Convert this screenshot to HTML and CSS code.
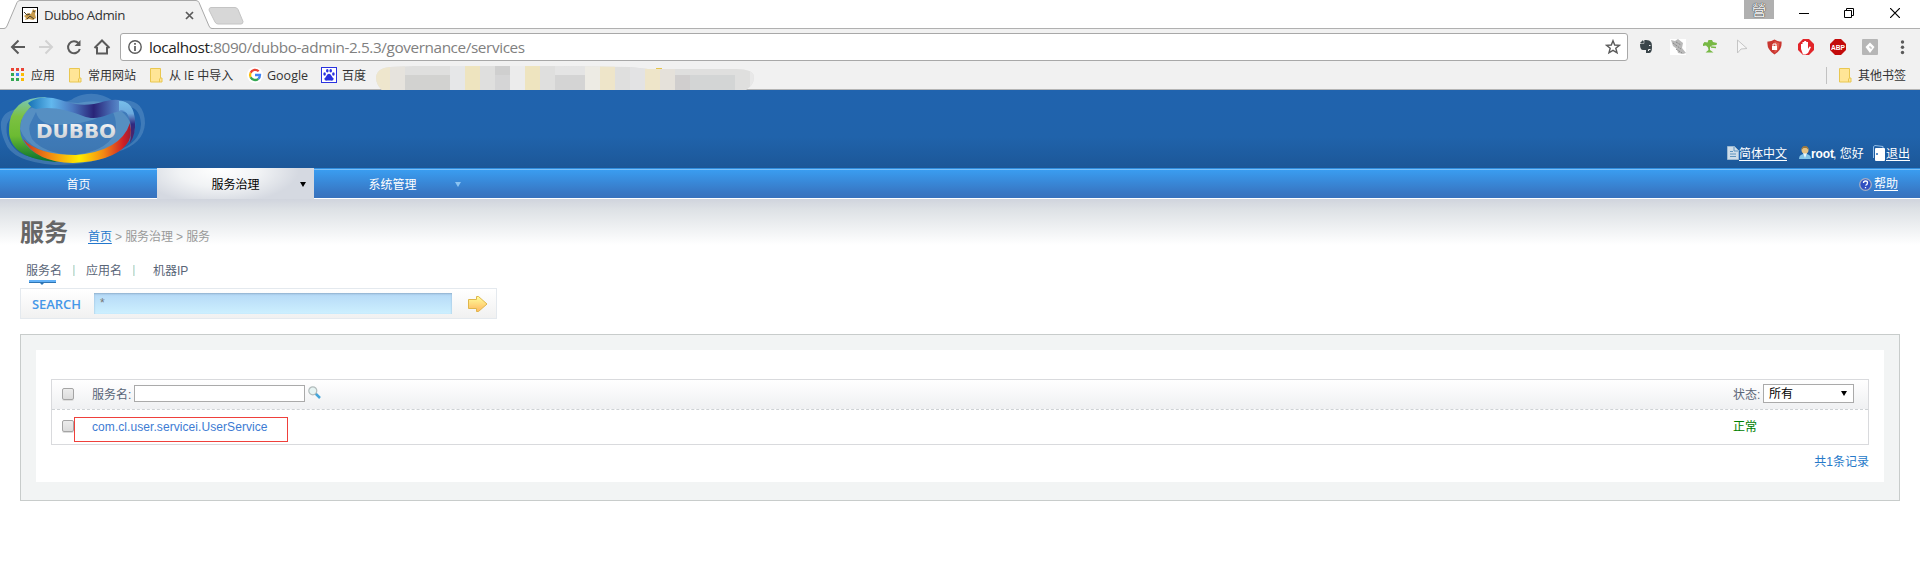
FILE: index.html
```html
<!DOCTYPE html>
<html lang="zh-CN">
<head>
<meta charset="utf-8">
<title>Dubbo Admin</title>
<link rel="stylesheet" href="styles.css">
</head>
<body>
<div class="tabstrip">
  <div class="tab">
    <svg class="tab-shape" width="214" height="29" viewBox="0 0 214 29"><path d="M0 28.5H4Q6 28.500 7 26L17 2.500Q18 .5 20 .5H196Q198 .5 199 2.500L209 26Q210 28.500 212 28.500H214V29H0z" fill="#f1f1f1"/><path d="M0 28.5H4Q6 28.500 7 26L17 2.500Q18 .5 20 .5H196Q198 .5 199 2.500L209 26Q210 28.500 212 28.500H214" fill="none" stroke="#a9a9a9"/></svg>
    <svg class="favicon" width="16" height="16" viewBox="0 0 16 16"><rect x=".5" y=".5" width="15" height="15" fill="#fff" stroke="#000"/><path d="M2 9l4-3 3 1 2-5 1 1h2l-1 4 1 4-3 2-4-1-4 1 1-2z" fill="#c89b4b"/><path d="M2 5l3 3 3-1M5 12l3-3 4 3M11 4l2 1" stroke="#49402e" fill="none"/></svg>
    <span class="tab-title">Dubbo Admin</span>
    <svg class="tab-close" width="9" height="9" viewBox="0 0 9 9"><path d="M1 1l7 7M8 1L1 8" stroke="#5a5a5a" stroke-width="1.700"/></svg>
  </div>
  <svg class="newtab" width="36" height="18" viewBox="0 0 36 18"><path d="M3 .5H27Q29 .5 30 2.500L35 14.500Q35 17 33 17H10Q8 17 7 15L1 3Q1 .5 3 .5z" fill="#d7d7d7" stroke="#c4c4c4"/></svg>
  <div class="window-controls">
    <span class="ime">營</span>
    <svg class="win-min" width="10" height="10" viewBox="0 0 10 10"><path d="M0 5.500H10" stroke="#000"/></svg>
    <svg class="win-max" width="10" height="10" viewBox="0 0 10 10"><path d="M.5 2.500H7.500V9.500H.5zM2.500 2.500V.5H9.500V7.500H7.500" fill="none" stroke="#000"/></svg>
    <svg class="win-close" width="10" height="10" viewBox="0 0 10 10"><path d="M0 0L10 10M10 0L0 10" stroke="#000" stroke-width="1.200"/></svg>
  </div>
</div>

<div class="toolbar">
  <svg class="nav-icons" width="112" height="36" viewBox="0 0 112 36" fill="none" stroke-width="2">
    <path d="M25 18H12.500M18.500 11.500L12 18l6.500 6.500" stroke="#5a5a5a"/>
    <path d="M39 18H51.500M45.500 11.500L52 18l-6.500 6.500" stroke="#d2d2d2"/>
    <path d="M78.500 14.200A6 6 0 1 0 79.800 20" stroke="#5a5a5a"/><path d="M80.500 11v6h-6z" fill="#5a5a5a"/>
    <path d="M94.500 19L102 11.500L109.500 19M97 18v6.500h10V18" stroke="#5a5a5a"/>
  </svg>
  <div class="address">
    <svg class="info" width="14" height="14" viewBox="0 0 14 14"><circle cx="7" cy="7" r="6.200" fill="none" stroke="#5a5a5a" stroke-width="1.400"/><path d="M7 3v1.700M7 6v5" stroke="#5a5a5a" stroke-width="1.700"/></svg>
    <span class="url">localhost<span class="path">:8090/dubbo-admin-2.5.3/governance/services</span></span>
    <svg class="star" width="16" height="16" viewBox="0 0 16 16"><path d="M8 1.700l1.700 4.300 4.800.3-3.700 3 1.200 4.500L8 11.300l-4 2.500 1.200-4.500-3.700-3 4.800-.3z" fill="none" stroke="#5a5a5a" stroke-width="1.400"/></svg>
  </div>
  <svg class="extensions" width="290" height="36" viewBox="1630 29 290 36">
    <path d="M1640 44l4.500-4q5-.5 6.500 2 1 1 1 5 0 6-3 6h-3v-3h-3q-3 0-3-6z" fill="#3b464b"/><path d="M1640 43l3-3v3z" fill="#3b464b"/><path d="M1640 43.500h4v-3.500" fill="none" stroke="#f1f1f1" stroke-width=".5"/><path d="M1648.500 51v-1.500h2" fill="none" stroke="#f1f1f1"/><path d="M1649 45.500h1.500" stroke="#f1f1f1"/>
    <rect x="1670" y="39" width="16" height="16" fill="#fff"/><path d="M1671 40l4 1 3-2 5 4-1 5 4 5-3 1-5-1-1-4-4-3z" fill="#b9b9b9"/><path d="M1673 43l8 6m-5-7l5 3m-5 4l6 4" stroke="#888" stroke-dasharray="2 1"/>
    <path d="M1703 44l1.500-2 3 .5 1-2.500h3.500l1 2 4 1-.5 2-4.500.5-2 1.500v3l3.500 2.500h-8l3-2.500-.5-2.500-2-2-3 .5z" fill="#77b844"/><path d="M1711 47l5 .5" stroke="#77b844" stroke-width="1.500"/>
    <path d="M1737.500 40v13l3.500-4 6-.5z" fill="#f6f6f6" stroke="#c5c5c5"/>
    <path d="M1774.500 39.500q4 2.500 7 2 1 8-7 13-8-5-7-13 3 .5 7-2z" fill="#c93630"/><path d="M1774.500 41q3 2 5 2 0 7-5 10z" fill="#e05a4e"/><rect x="1772" y="46" width="5" height="4" fill="#fff"/><path d="M1773 46v-2h3v2" fill="none" stroke="#fff"/>
    <path d="M1803 39h6l5 5v6l-5 5h-6l-5-5v-6z" fill="#e2252a"/><path d="M1801 49v-5h1.500v3v-5h1.700v4v-5h2v5v-4h1.800v7l1.500-2.500 1.500.5-3 6-2.500 1.500h-2.500z" fill="#fff"/>
    <path d="M1835 39h6l5 5v6l-5 5h-6l-5-5v-6z" fill="#c30b0b"/><text x="1831" y="50" textLength="14" lengthAdjust="spacingAndGlyphs" class="abp">ABP</text>
    <rect x="1862" y="39" width="16" height="16" rx="1" fill="#b6b6b6"/><path d="M1870 42.500l4.500 4.500-4.500 6-4.500-6z" fill="#fff"/><path d="M1869 47h2v2" stroke="#b6b6b6" fill="none"/>
    <circle cx="1902.500" cy="42" r="1.700" fill="#5a5a5a"/><circle cx="1902.500" cy="47.200" r="1.700" fill="#5a5a5a"/><circle cx="1902.500" cy="52.500" r="1.700" fill="#5a5a5a"/>
  </svg>
</div>

<div class="bookmarks">
  <svg class="apps" width="13" height="13" viewBox="0 0 13 13"><path d="M0 0h3v3H0zM5 0h3v3H5zM10 0h3v3h-3z" fill="#ea4335"/><path d="M0 5h3v3H0zM0 10h3v3H0z" fill="#34a853"/><path d="M5 5h3v3H5z" fill="#4285f4"/><path d="M5 10h3v3H5z" fill="#34a853"/><path d="M10 5h3v3h-3zM10 10h3v3h-3z" fill="#fbbc05"/></svg>
  <span class="bm bm-apps">应用</span>
  <svg class="folder" width="13" height="15" viewBox="0 0 13 15"><path d="M.5.5h10v9.500h1.500v4H.5z" fill="#ffe596" stroke="#e9c750"/><path d="M9.500 14v-3l1-1" fill="none" stroke="#e9c750"/></svg>
  <span class="bm bm-sites">常用网站</span>
  <svg class="folder" width="13" height="15" viewBox="0 0 13 15"><path d="M.5.5h10v9.500h1.500v4H.5z" fill="#ffe596" stroke="#e9c750"/><path d="M9.500 14v-3l1-1" fill="none" stroke="#e9c750"/></svg>
  <span class="bm bm-import">从 IE 中导入</span>
  <svg class="google" width="16" height="16" viewBox="0 0 16 16"><circle cx="8" cy="8" r="8" fill="#fff"/><g fill="none" stroke-width="2.300"><path d="M11.700 4.300A5 5 0 0 0 3.600 5.700" stroke="#ea4335"/><path d="M3.600 5.700a5 5 0 0 0 0 4.600" stroke="#fbbc05"/><path d="M3.600 10.300a5 5 0 0 0 7.700 1.500" stroke="#34a853"/><path d="M11.300 11.800A5 5 0 0 0 13 8H8" stroke="#4285f4"/></g></svg>
  <span class="bm bm-google">Google</span>
  <svg class="baidu" width="16" height="16" viewBox="0 0 16 16"><rect x=".5" y=".5" width="15" height="15" fill="#fff" stroke="#2a32e0"/><g fill="#2a32e0"><ellipse cx="3.600" cy="7" rx="1.300" ry="1.700"/><ellipse cx="6.300" cy="3.800" rx="1.300" ry="1.800"/><ellipse cx="9.700" cy="3.800" rx="1.300" ry="1.800"/><ellipse cx="12.400" cy="7" rx="1.300" ry="1.700"/><path d="M8 6.700q1.500 0 2.500 2t2.200 2.700q0 2.600-3 2.200h-3.400q-3 .4-3-2.200 1.200-.7 2.200-2.700t2.500-2z"/></g></svg>
  <span class="bm bm-baidu">百度</span>
  <svg class="mosaic" width="380" height="24" viewBox="375 66 380 24" shape-rendering="crispEdges">
    <clipPath id="m"><path d="M376 77q1-9 14-10l23-1h149l68 1 18 2h88q18 0 18 8 0 8-8 13H382q-6-5-6-13z"/></clipPath>
    <g clip-path="url(#m)">
      <path fill="#dfdfde" d="M375 66h380v24H375z"/>
      <path fill="#eee6cd" d="M375 66h15v24h-15z"/><path fill="#e6e3dd" d="M390 66h15v24h-15z"/>
      <path fill="#d2d2d0" d="M405 75h45v15h-45z"/><path fill="#e6e7e8" d="M450 66h15v24h-15z"/>
      <path fill="#eee4bf" d="M465 66h15v24h-15zM525 66h15v24h-15z"/><path fill="#cfcfcf" d="M495 66h15v9h-15z"/><path fill="#d5d5d6" d="M495 75h15v15h-15z"/>
      <path fill="#ececec" d="M510 66h15v24h-15z"/><path fill="#e4e4e4" d="M555 66h30v9h-30z"/><path fill="#d4d4d4" d="M555 75h30v15h-30z"/>
      <path fill="#edebe4" d="M585 66h15v24h-15z"/><path fill="#eee5c9" d="M600 66h15v24h-15zM645 66h15v24h-15z"/><path fill="#e3e3e4" d="M630 66h15v24h-15z"/><path fill="#e5e1da" d="M660 66h15v24h-15z"/>
      <path fill="#d0cece" d="M675 75h15v15h-15z"/><path fill="#d3d5d5" d="M690 75h45v15h-45z"/><path fill="#e8e8e8" d="M750 66h5v24h-5z"/>
    </g>
    <path d="M656 68.500h6" stroke="#e5c44c"/>
  </svg>
  <div class="other">
    <svg class="folder" width="13" height="15" viewBox="0 0 13 15"><path d="M.5.5h10v9.500h1.500v4H.5z" fill="#ffe596" stroke="#e9c750"/><path d="M9.500 14v-3l1-1" fill="none" stroke="#e9c750"/></svg>
    <span class="bm">其他书签</span>
  </div>
</div>

<header class="header">
  <svg class="logo" width="150" height="78" viewBox="0 90 150 78">
    <defs>
      <linearGradient id="green" x1="0" y1="0" x2="0" y2="1"><stop offset="0" stop-color="#78c6c0"/><stop offset=".3" stop-color="#7cc142"/><stop offset=".6" stop-color="#6cbb32"/><stop offset="1" stop-color="#05702e"/></linearGradient>
      <linearGradient id="blue"><stop offset="0" stop-color="#1672b5"/><stop offset=".22" stop-color="#62b8ee"/><stop offset=".42" stop-color="#4a78c0"/><stop offset=".62" stop-color="#292478"/><stop offset=".8" stop-color="#4b72b9"/><stop offset="1" stop-color="#76bdea"/></linearGradient>
      <linearGradient id="warm"><stop offset="0" stop-color="#c7331f"/><stop offset=".25" stop-color="#f28a12"/><stop offset=".52" stop-color="#ffed00"/><stop offset=".75" stop-color="#f28714"/><stop offset=".93" stop-color="#cf2026"/><stop offset="1" stop-color="#9c1c35"/></linearGradient>
      <linearGradient id="right" x1="0" y1="0" x2="0" y2="1"><stop offset="0" stop-color="#78bfea"/><stop offset=".3" stop-color="#6ca9dd"/><stop offset=".55" stop-color="#302a80"/><stop offset="1" stop-color="#5b2260"/></linearGradient>
      <linearGradient id="silver" x1="0" y1="0" x2="0" y2="1"><stop offset="0" stop-color="#fff"/><stop offset="1" stop-color="#bfc4ca"/></linearGradient>
    </defs>
    <path fill="#92bbdc" fill-opacity=".27" fill-rule="evenodd" d="M1 122Q4 109 22 109Q32 97 50 99Q65 105 74 98Q95 88 115 102Q144 95 145 123Q144 144 117 152Q95 165 55 165Q12 162 5 142Q0 131 1 122zM7 124Q4 142 20 153Q36 161 68 161Q105 159 118 150Q140 143 141 124Q140 109 130 107Q138 120 134 133Q125 157 77 161Q25 160 13 143Q7 134 10 118z"/>
    <path fill="#8cbcd6" fill-opacity=".3" fill-rule="evenodd" d="M27 110Q48 100 78 103Q105 97 121 111Q136 123 129 138Q116 155 75 158Q29 154 20 129Q21 116 27 110zM31 122Q27 128 32 139Q44 154 75 155Q112 150 116 128Q116 116 112 111Q92 123 70 124Q40 129 36 112z"/>
    <path fill="url(#green)" d="M47 97Q9 97 9 130Q9 160 60 162Q43 159 31 150Q20 141 20 129Q20 109 47 97z"/>
    <path fill="url(#blue)" d="M28 103Q38 96 53 98C67 101 75 107 94 104C106 101 118 96 128 104Q134 110 134 121Q129 113 125 112C112 109 101 123 83 116C67 110 52 106 36 109Q31 108 28 103z"/>
    <path fill="url(#right)" d="M119 101Q134 101 135 121Q136 134 130 143Q132 130 130 121Q126 107 119 111z"/>
    <path fill="url(#warm)" d="M23 139Q38 155 76 155Q121 151 130 123Q133 138 126 145Q113 161 73 163Q35 162 23 139z"/>
    <text class="logo-text" x="36" y="138" textLength="80" lengthAdjust="spacingAndGlyphs" fill="url(#silver)">DUBBO</text>
  </svg>
  <div class="user-links">
    <svg class="doc-ico" width="12" height="14" viewBox="0 0 12 14"><path d="M.5.5H7.500L11.500 4.500V13.500H.5z" fill="#cfdde9" stroke="#9db9d1"/><path d="M7 1v4h4M3 5.500h3M3 8h6M3 10.500h6" stroke="#5e94be" fill="none"/></svg><a class="lang">简体中文</a>
    <svg class="user-ico" width="12" height="13" viewBox="0 0 12 13"><path d="M0 13q0-5 6-5t6 5z" fill="#83c5ea"/><path d="M4 7h4l-2 5z" fill="#e9f6fc"/><circle cx="6" cy="4" r="3.500" fill="#e4c284"/><path d="M2.500 4q0-4 3.500-4t3.500 4l-2-2h-3z" fill="#99763e"/></svg><b class="root">root</b><span class="hello">, 您好</span>
    <svg class="door-ico" width="14" height="18" viewBox="0 0 14 18"><path d="M1.500 14V2.500L3 1.500l8 1v2" fill="none" stroke="#95bfe9"/><rect x="3" y="4" width="10" height="13" rx="1" fill="#fff"/><circle cx="5" cy="10" r="1" fill="#286db8"/></svg><a>退出</a>
  </div>
</header>

<nav class="nav">
  <a class="nav-item"><span>首页</span></a>
  <a class="nav-item active"><span>服务治理</span><i class="caret"></i></a>
  <a class="nav-item menu"><span>系统管理</span><i class="caret"></i></a>
  <div class="help">
    <svg width="13" height="13" viewBox="0 0 13 13"><circle cx="6.500" cy="6.500" r="5.800" fill="#314fc1" stroke="#a6adc3" stroke-width="1.300"/><path d="M4.500 5q0-2 2-2t2 1.700-2 2.800m0 1.500v1.200" fill="none" stroke="#fff" stroke-width="1.300"/></svg><a>帮助</a>
  </div>
</nav>

<main class="page">
  <div class="heading">
    <h1>服务</h1>
    <div class="crumbs"><a>首页</a> &gt; 服务治理 &gt; 服务</div>
  </div>
  <div class="filters">
    <span class="filter current">服务名</span><i class="sep"></i>
    <span class="filter">应用名</span><i class="sep"></i>
    <span class="filter machine">机器IP</span>
  </div>
  <div class="search">
    <span class="search-label">SEARCH</span>
    <div class="search-input">*</div>
    <svg class="go" width="20" height="16" viewBox="0 0 20 16"><defs><linearGradient id="gold" x1="0" y1="0" x2="0" y2="1"><stop offset="0" stop-color="#ffff9c"/><stop offset="1" stop-color="#ffb85f"/></linearGradient></defs><path d="M.5 3.500h8v-3h2l8.500 7.500-8.500 7.500h-2v-3h-8z" fill="url(#gold)" stroke="#dfb64b"/></svg>
  </div>
  <section class="panel">
    <div class="panel-body">
      <div class="table">
        <div class="row head">
          <i class="check"></i><span class="name">服务名:</span><div class="field"></div>
          <svg class="magnifier" width="13" height="13" viewBox="0 0 13 13"><path d="M7.500 7.500l4.500 4.500" stroke="#45a5d9" stroke-width="2.500"/><circle cx="4.800" cy="4.800" r="4" fill="#e6f4f3" stroke="#b3bcbc" stroke-width="1.200"/></svg>
          <div class="status"><span class="status-label">状态:</span><div class="select">所有<i class="caret"></i></div></div>
        </div>
        <div class="row item">
          <i class="check"></i><div class="marked"><a class="service">com.cl.user.servicei.UserService</a></div>
          <div class="status ok">正常</div>
        </div>
      </div>
      <div class="total">共1条记录</div>
    </div>
  </section>
</main>
</body>
</html>
```

FILE: styles.css
```css
* { box-sizing: border-box; }
body { margin: 0; width: 1920px; height: 580px; overflow: hidden; background: #fff; font: 12px/16px "Liberation Sans", "Noto Sans CJK SC", sans-serif; color: #596577; display: flex; flex-direction: column; }
svg { display: block; flex: none; }
span, a, b { white-space: nowrap; }

.tabstrip { height: 29px; display: flex; border-bottom: 1px solid #b0b0b0; flex: none; }
.tab { position: relative; width: 208px; height: 29px; display: flex; align-items: center; }
.tab-shape { position: absolute; left: 0; top: 0; }
.favicon { position: relative; margin: 1px 6px 0 22px; }
.tab-title { position: relative; width: 141px; font: 13.3px/20px "Open Sans", sans-serif; color: #333; letter-spacing: -.45px; }
.tab-close { position: relative; margin-top: 1px; }
.newtab { margin-top: 7px; }
.window-controls { display: flex; margin-left: auto; width: 176px; }
.ime { width: 30px; height: 19px; background: #b0b0b0; color: #fff; text-align: center; font: 14px/19px "Noto Sans CJK TC", sans-serif; text-shadow: 0 0 1px #333, 0 0 1px #333; }
.win-min { margin: 8px 0 0 25px; }
.win-max { margin: 8px 0 0 35px; }
.win-close { margin: 8px 0 0 36px; }

.toolbar { height: 36px; background: #f1f1f1; display: flex; flex: none; }
.address { margin: 4px 0 0 8px; width: 1508px; height: 28px; border: 1px solid #a8a8a8; border-radius: 3px; background: #fff; display: flex; align-items: center; }
.info { margin-left: 7px; }
.url { margin: -1px 0 0 7px; font: 15.3px/24px "Open Sans", sans-serif; color: #222; letter-spacing: -.39px; }
.path { color: #808080; }
.star { margin-left: auto; margin-right: 6px; }
.extensions { margin-left: 2px; }
.abp { font: bold 7.500px "Liberation Sans", sans-serif; fill: #fff; }

.bookmarks { height: 25px; background: #f1f1f1; border-bottom: 1px solid #b5b5b5; display: flex; flex: none; color: #333; }
.bm { font: 12px/21px "Open Sans", "Noto Sans CJK SC", sans-serif; margin-left: 6px; display: block; }
.apps { margin: 3px 0 0 11px; }
.bm-apps { width: 38px; margin-left: 7px; }
.folder { margin-top: 3px; }
.bm-sites { width: 62px; }
.bm-import { width: 80px; }
.google { margin: 2px 0 0 -2px; }
.bm-google { margin-left: 4px; width: 54px; font-size: 12.5px; }
.baidu { margin-top: 2px; }
.bm-baidu { margin-left: 5px; width: 33px; }
.mosaic { margin: 1px 0 -1px; }
.other { margin-left: auto; width: 94px; height: 17px; margin-top: 2px; border-left: 1px solid #c2c2c2; display: flex; padding-left: 12px; }
.other .folder { margin-top: 1px; }
.other .bm { line-height: 17px; }

.header { height: 78px; flex: none; display: flex; justify-content: space-between; background: linear-gradient(#2063ae, #2063ab 60%, #1c5798); }
.logo-text { font: bold 20px "DejaVu Sans", sans-serif; }
.user-links { display: flex; width: 193px; color: #fff; padding-top: 56px; }
.user-links a, .help a { text-decoration: underline; text-underline-offset: 2px; }
.lang { width: 60px; }
.root { font-family: "Liberation Sans", sans-serif; width: 23px; letter-spacing: -.1px; }
.hello { width: 38px; margin-left: -1px; }
.door-ico { margin: -2px 0 0 1px; }

.nav { height: 30px; flex: none; display: flex; color: #fff; background: linear-gradient(#3aa0f4, #3878c5 80%, #3872bd); box-shadow: inset 0 1px #2f8ee0, inset 0 2px #7dc0f8; }
.nav-item { position: relative; width: 157px; text-align: center; line-height: 35px; }
.nav-item.active { color: #000; height: 31px; background: radial-gradient(ellipse 80px 34px at 62px 2px, #fff, #f1f3f5 50%, #d5d9e1); }
.caret { border: 3px solid transparent; border-top: 5px solid #8cc4f2; border-bottom: 0; width: 0; height: 0; position: absolute; right: 10px; top: 14px; }
.active .caret { border-top-color: #000; right: 8px; }
.help { margin-left: auto; width: 61px; display: flex; gap: 2px; line-height: 33px; }
.help svg { margin-top: 10px; }

.page { flex: 1; padding: 0 20px; border-top: 1px solid #fff; background: linear-gradient(#d0d4dd, #dde1e5 10px, #fff 46px); }
.heading { display: flex; height: 55px; }
h1 { margin: 15px 0 0; width: 68px; font: bold 24px/34px "Noto Sans CJK SC", sans-serif; color: #666; }
.crumbs { margin-top: 30px; color: #999; letter-spacing: -.1px; white-space: nowrap; }
.crumbs a { color: #2277cc; text-decoration: underline; text-underline-offset: 2px; }
.filters { display: flex; height: 34px; padding: 9px 0 0 6px; }
.filter { position: relative; width: 36px; }
.current::before { content: ""; position: absolute; left: 3px; top: 17px; width: 27px; height: 3px; background: linear-gradient(#62b1f7 2px, #2d75b4 2px); }
.current::after { content: ""; position: absolute; left: 14px; top: 20px; border: 2px solid transparent; border-top-color: #2d75b4; border-bottom: 0; }
.sep { width: 2px; height: 11px; margin: 2px 11px 0 11px; background: linear-gradient(90deg, #d2dccb 50%, #c6ebef 50%); }
.sep + .machine { margin-left: 7px; }
.search { width: 477px; height: 31px; border: 1px solid #e4e9ee; background: linear-gradient(#fff, #f1f1f1); display: flex; }
.search-label { margin-left: 11px; width: 62px; font: 600 13px/30px "Open Sans", sans-serif; color: #4697e8; letter-spacing: -.05px; }
.search-input { margin-top: 4px; width: 358px; height: 21px; padding-left: 6px; line-height: 20px; color: #777; background: linear-gradient(#b5d9f6, #cdf0ff); box-shadow: inset 0 1px 2px #8fb0cc; }
.go { margin: 7px 0 0 16px; }
.panel { margin-top: 15px; width: 1880px; height: 167px; border: 1px solid #c8cccb; background: #f2f4f4; padding: 15px; }
.panel-body { width: 1848px; height: 132px; background: #fff; padding: 29px 15px 0; }
.table { border: 1px solid #d9dadd; height: 66px; }
.row { display: flex; padding-left: 10px; }
.head { height: 30px; border-bottom: 1px dashed #ced2d5; background: linear-gradient(#fff, #eff0f2); }
.check { flex: none; width: 12px; height: 12px; margin-top: 8px; border: 1px solid #a4a4a4; border-radius: 2px; background: linear-gradient(#ececec, #dcdcdc); box-shadow: 0 1px #ddd; }
.name { margin: 7px 0 0 18px; width: 42px; }
.field { width: 171px; height: 17px; margin-top: 5px; border: 1px solid #aaa; background: #fff; }
.magnifier { margin: 6px 0 0 3px; }
.status { margin-left: auto; width: 135px; display: flex; }
.status-label { width: 30px; margin-top: 7px; }
.select { position: relative; width: 91px; height: 19px; margin-top: 4px; border: 1px solid #aaa; background: #fff; color: #000; padding-left: 5px; line-height: 18px; }
.select .caret { border-top-color: #000; right: 6px; top: 6px; }
.item { height: 34px; }
.item .check { margin-top: 10px; }
.marked { width: 214px; height: 25px; margin-top: 7px; border: 1px solid #ef403b; padding: 1px 0 0 17px; }
.service { color: #3d7bd3; letter-spacing: .07px; }
.ok { color: #008000; padding-top: 9px; }
.total { text-align: right; color: #2679c9; margin-top: 9px; }
```
